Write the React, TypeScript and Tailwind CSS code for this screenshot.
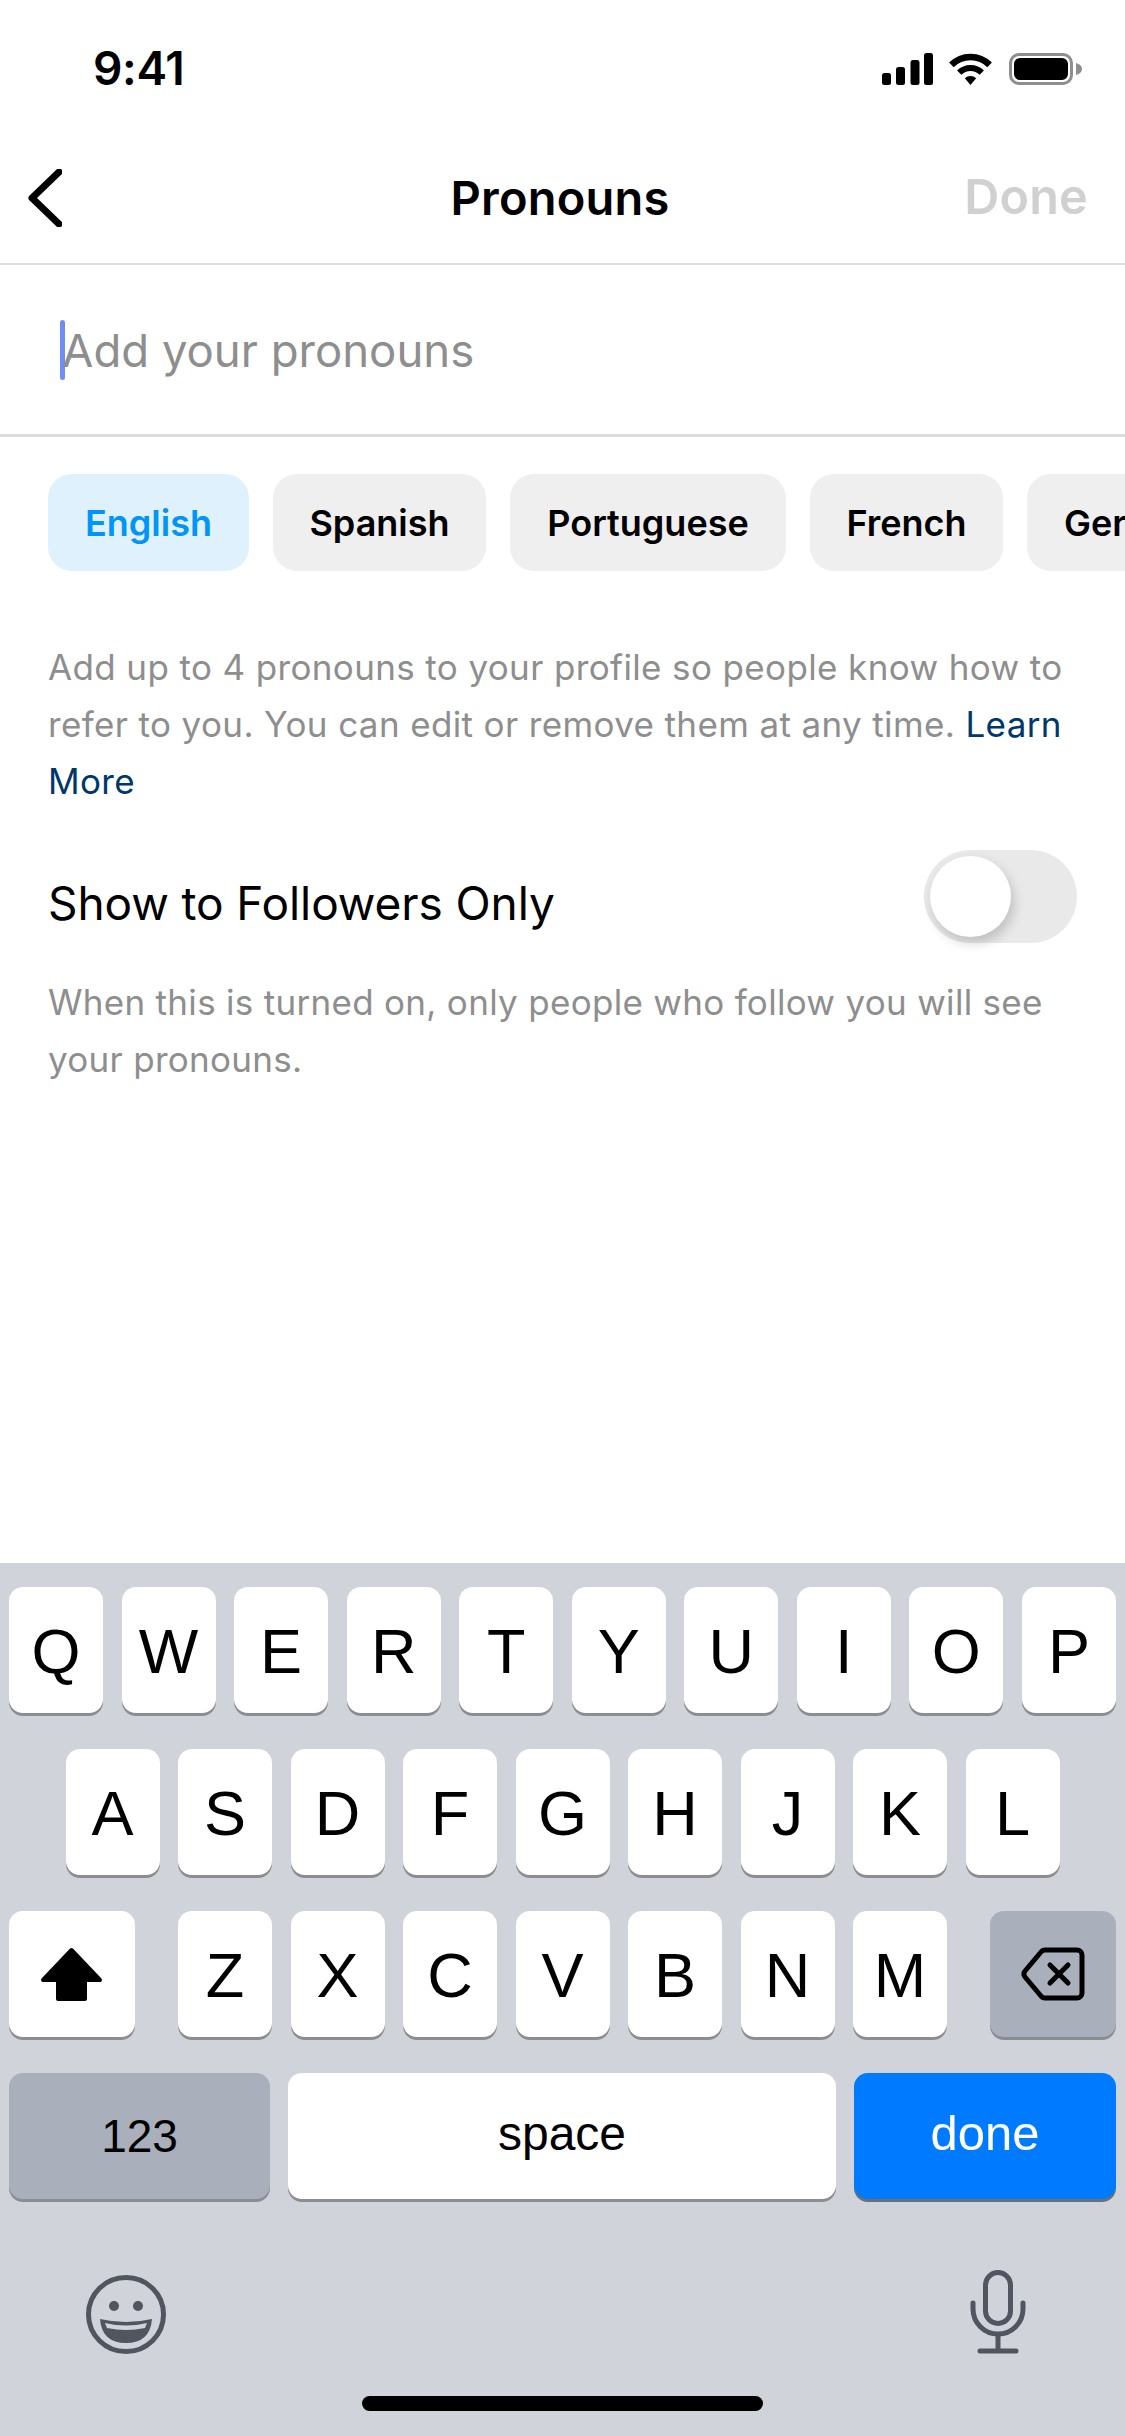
const ROW_ONE = ["Q", "W", "E", "R", "T", "Y", "U", "I", "O", "P"]
const ROW_TWO = ["A", "S", "D", "F", "G", "H", "J", "K", "L"]
const ROW_THREE = ["Z", "X", "C", "V", "B", "N", "M"]
const CHIPS = [
  { label: "Spanish", width: "w-[213px]" },
  { label: "Portuguese", width: "w-[276px]" },
  { label: "French", width: "w-[193px]" },
  { label: "German", width: "w-[212px]" },
]

function LetterKey({ letter }: { letter: string }) {
  return (
    <div className="flex h-[126px] w-[94px] shrink-0 items-center justify-center rounded-[14px] bg-white pt-[3px] text-[63px] leading-none text-black shadow-[0_3px_0_#8b8d92]">
      {letter}
    </div>
  )
}

function StatusIcons() {
  return (
    <div className="flex items-center">
      <svg width="51" height="32" viewBox="0 0 51 32" fill="black">
        <rect x="0" y="20" width="9" height="12" rx="2.5" />
        <rect x="14" y="14" width="9" height="18" rx="2.5" />
        <rect x="28.5" y="7" width="9" height="25" rx="2.5" />
        <rect x="42" y="0" width="9" height="32" rx="2.5" />
      </svg>
      <svg className="ml-[15px]" width="45" height="32" viewBox="0 0 45 32">
        <path d="M3.4 11.9A27 27 0 0 1 41.6 11.9" fill="none" stroke="black" strokeWidth="6.5" />
        <path d="M11.2 19.7A16 16 0 0 1 33.8 19.7" fill="none" stroke="black" strokeWidth="6" />
        <path d="M22.5 32L16.8 25.3A8 8 0 0 1 28.2 25.3Z" fill="black" />
      </svg>
      <div className="ml-[16px] flex h-[32px] w-[64px] items-center justify-center rounded-[10px] border-[3px] border-[#8e8e8e]">
        <div className="h-[22px] w-[54px] rounded-[6px] bg-black" />
      </div>
      <svg className="ml-[3px]" width="6" height="12" viewBox="0 0 6 12" fill="#8e8e8e">
        <path d="M0 0C3.5 1 6 3 6 6S3.5 11 0 12Z" />
      </svg>
    </div>
  )
}

export default function App() {
  return (
    <div className="flex h-[2436px] w-[1125px] flex-col overflow-hidden bg-white font-['Inter',sans-serif] text-black">
      {/* Status bar */}
      <div className="flex h-[132px] items-start justify-between pl-[93px] pr-[43px] pt-[41px]">
        <span className="text-[46px] font-semibold leading-[54px] tracking-[-0.3px]">9:41</span>
        <div className="pt-[12px]">
          <StatusIcons />
        </div>
      </div>

      {/* Nav */}
      <div className="grid h-[133px] grid-cols-[1fr_auto_1fr] items-center border-b-[2px] border-[#dedede] pl-[28px] pr-[37px]">
        <svg width="34" height="58" viewBox="0 0 34 58" fill="none" stroke="black" strokeWidth="7" strokeLinecap="round" strokeLinejoin="round">
          <path d="M31 3L4 29L31 55" />
        </svg>
        <span className="ml-[4px] text-[47px] font-semibold leading-none tracking-[0.2px]">Pronouns</span>
        <span className="justify-self-end text-[48.5px] font-semibold leading-none tracking-[0.2px] text-[#d0d0d0]">Done</span>
      </div>

      {/* Input */}
      <div className="flex h-[172px] items-center border-b-[3px] border-[#dbdbdb] pl-[60px]">
        <div className="h-[60px] w-[5px] rounded-full bg-[#6f8ff0]" />
        <span className="-ml-[3px] pt-[2px] text-[45.5px] leading-none text-[#8e8e8e]">Add your pronouns</span>
      </div>

      {/* Language chips */}
      <div className="mt-[37px] flex gap-[24px] overflow-hidden pl-[48px]">
        <div className="flex h-[97px] w-[201px] shrink-0 items-center justify-center rounded-[24px] bg-[#dff1fd] text-[36px] font-semibold text-[#0095f6]">
          English
        </div>
        {CHIPS.map((chip) => (
          <div
            key={chip.label}
            className={`flex h-[97px] shrink-0 items-center justify-center rounded-[24px] bg-[#efefef] text-[36px] font-semibold ${chip.width}`}
          >
            {chip.label}
          </div>
        ))}
      </div>

      {/* Description */}
      <p className="mt-[68px] px-[48px] text-[35px] leading-[57px] tracking-[0.37px] text-[#8e8e8e]">
        Add up to 4 pronouns to your profile so people know how to refer to you. You can edit or remove them at any time.{" "}
        <span className="text-[#00376b]">Learn More</span>
      </p>

      <div className="mt-[40px] flex h-[93px] items-center justify-between pl-[48px] pr-[48px]">
        <span className="pt-[12px] text-[46px] leading-none tracking-[-0.1px]">Show to Followers Only</span>
        <div className="flex h-[93px] w-[153px] items-center rounded-full bg-[#e9e9e9] pl-[6px]">
          <div className="h-[81px] w-[81px] rounded-full bg-white shadow-[3px_6px_12px_rgba(0,0,0,0.18)]" />
        </div>
      </div>

      <p className="mt-[31px] px-[48px] text-[35px] leading-[57px] tracking-[0.3px] text-[#8e8e8e]">
        When this is turned on, only people who follow you will see your pronouns.
      </p>

      {/* Keyboard */}
      <div className="mt-auto flex h-[873px] flex-col bg-[#d0d3da] pt-[24px] font-['Liberation_Sans',sans-serif]">
        <div className="flex flex-col gap-[36px]">
          <div className="flex justify-between px-[9px]">
            {ROW_ONE.map((letter) => (
              <LetterKey key={letter} letter={letter} />
            ))}
          </div>
          <div className="flex justify-center gap-[18.5px]">
            {ROW_TWO.map((letter) => (
              <LetterKey key={letter} letter={letter} />
            ))}
          </div>
          <div className="flex items-center justify-between px-[9px]">
            <div className="flex h-[126px] w-[126px] items-center justify-center rounded-[14px] bg-white pr-[2px] shadow-[0_3px_0_#8b8d92]">
              <svg width="63" height="55" viewBox="0 0 63 55" fill="black" stroke="black" strokeWidth="4" strokeLinejoin="round">
                <path d="M31.5 3L60 33H45V52H18V33H3Z" />
              </svg>
            </div>
            <div className="flex gap-[18.5px]">
              {ROW_THREE.map((letter) => (
                <LetterKey key={letter} letter={letter} />
              ))}
            </div>
            <div className="flex h-[126px] w-[126px] items-center justify-center rounded-[14px] bg-[#a9afbb] shadow-[0_3px_0_#8b8d92]">
              <svg width="64" height="54" viewBox="0 0 64 54" fill="none" stroke="black" strokeWidth="5" strokeLinecap="round" strokeLinejoin="round">
                <path d="M24 3H56A5 5 0 0 1 61 8V46A5 5 0 0 1 56 51H24A5 5 0 0 1 20 49L4 30A5 5 0 0 1 4 24L20 5A5 5 0 0 1 24 3Z" />
                <path d="M29 18L47 36M47 18L29 36" />
              </svg>
            </div>
          </div>
          <div className="flex gap-[18px] px-[9px]">
            <div className="flex h-[126px] w-[261px] items-center justify-center rounded-[14px] bg-[#a9afbb] text-[46px] shadow-[0_3px_0_#8b8d92]">123</div>
            <div className="flex h-[126px] flex-1 items-center justify-center rounded-[14px] bg-white pb-[5px] text-[48px] shadow-[0_3px_0_#8b8d92]">space</div>
            <div className="flex h-[126px] w-[262px] items-center justify-center rounded-[14px] bg-[#007aff] pb-[5px] text-[49px] text-white shadow-[0_3px_0_#6b6f78]">done</div>
          </div>
        </div>

        <div className="flex items-end justify-between pl-[86px] pr-[99px] pt-[71px]">
          <svg width="80" height="79" viewBox="0 0 80 79" fill="none">
            <ellipse cx="40" cy="39.5" rx="37.5" ry="37" stroke="#50555f" strokeWidth="5" />
            <circle cx="28" cy="31" r="5" fill="#50555f" />
            <circle cx="52" cy="31" r="5" fill="#50555f" />
            <path d="M14 44Q40 50 66 44Q64 68 40 68Q16 68 14 44Z" fill="#50555f" />
            <path d="M19 48Q40 53 61 48L59 53Q40 57 21 53Z" fill="#d0d3da" />
          </svg>
          <svg width="56" height="84" viewBox="0 0 56 84" fill="none" stroke="#50555f" strokeWidth="5" strokeLinecap="round">
            <rect x="15.5" y="2.5" width="25" height="51" rx="12.5" />
            <path d="M3 33V39A25 25 0 0 0 53 39V33" />
            <path d="M28 65V81M10 81H46" />
          </svg>
        </div>

        <div className="mt-[42px] flex justify-center">
          <div className="h-[15px] w-[401px] rounded-full bg-black" />
        </div>
      </div>
    </div>
  )
}
